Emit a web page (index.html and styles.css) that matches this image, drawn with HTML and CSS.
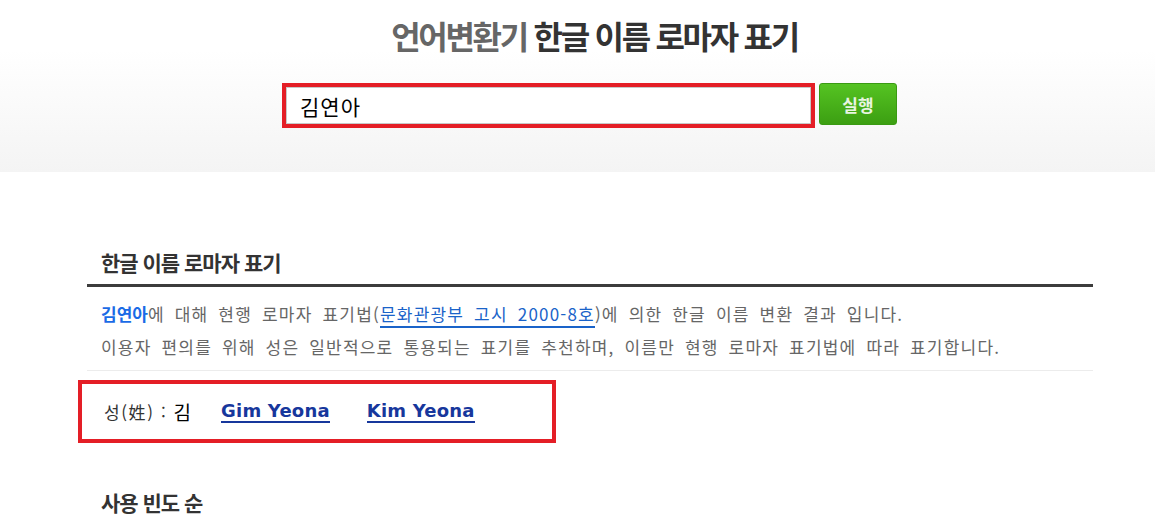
FILE: index.html
```html
<!DOCTYPE html>
<html lang="ko">
<head>
    <meta charset="UTF-8">
    <meta name="viewport" content="width=device-width, initial-scale=1.0">
    <title>언어변환기 - 한글 이름 로마자 표기</title>
    <link rel="stylesheet" href="styles.css">
</head>
<body>
    <header class="top">
        <h1 class="title"><span class="muted">언어변환기</span> 한글 이름 로마자 표기</h1>
        <form class="search" onsubmit="return false;">
            <div class="field">
                <input type="text" id="name" value="김연아">
            </div>
            <button type="submit" class="run">실행</button>
        </form>
    </header>

    <main class="content">
        <section class="block">
            <h2 class="sec-title">한글 이름 로마자 표기</h2>
            <div class="desc">
                <p><strong class="hl">김연아</strong>에 대해 현행 로마자 표기법(<a href="#" class="ref">문화관광부 고시 2000-8호</a>)에 의한 한글 이름 변환 결과 입니다.</p>
                <p>이용자 편의를 위해 성은 일반적으로 통용되는 표기를 추천하며, 이름만 현행 로마자 표기법에 따라 표기합니다.</p>
            </div>
            <div class="result">
                <span class="label">성(姓) : </span><span class="surname">김</span>
                <a href="#" class="roman">Gim Yeona</a>
                <a href="#" class="roman">Kim Yeona</a>
            </div>
        </section>

        <section class="block">
            <h2 class="sec-title plain">사용 빈도 순</h2>
        </section>
    </main>
</body>
</html>
```

FILE: styles.css
```css
body {
    margin: 0;
    font-family: "Noto Sans CJK KR", "Liberation Sans", sans-serif;
    background: #fff;
    color: #333;
}
.top {
    height: 172px;
    box-sizing: border-box;
    padding: 14px 0 0 24px;
    background: linear-gradient(#fff 0, #fff 50px, #f4f4f4 100%);
}
.title {
    margin: 0;
    padding-left: 10px;
    text-align: center;
    font-size: 32px;
    line-height: 42px;
    font-weight: bold;
    letter-spacing: -2.3px;
    color: #333;
}
.title .muted {
    color: #666;
}
.search {
    display: flex;
    justify-content: center;
    align-items: flex-start;
    gap: 4px;
    margin-top: 27px;
}
.field {
    width: 525px;
    height: 37px;
    border: 4px solid #e41e26;
}
.field input {
    width: 100%;
    height: 100%;
    box-sizing: border-box;
    margin: 0;
    border: 1px solid #c8c8c8;
    padding: 0 0 0 13px;
    font-family: "Noto Sans CJK KR", sans-serif;
    font-size: 21px;
    letter-spacing: 1px;
    color: #000;
    outline: none;
}
.run {
    width: 78px;
    height: 42px;
    border: 1px solid #3a9a13;
    border-radius: 3px;
    background: linear-gradient(#55c322, #3c9f12);
    color: #e9f5e2;
    font-family: "Noto Sans CJK KR", sans-serif;
    font-size: 17px;
    font-weight: bold;
    cursor: pointer;
}
.content {
    width: 1006px;
    margin-left: 87px;
}
.block {
    margin-top: 75px;
}
.block + .block {
    margin-top: 44px;
}
.sec-title {
    margin: 0;
    padding: 0 0 7px 14px;
    font-size: 21px;
    line-height: 30px;
    letter-spacing: -1px;
    font-weight: bold;
    color: #333;
    border-bottom: 3px solid #3c3c3c;
}
.sec-title.plain {
    border-bottom: none;
}
.desc {
    padding: 10px 0 7px 14px;
    border-bottom: 1px solid #ececec;
    color: #666;
    font-size: 17px;
    letter-spacing: 1.2px;
    word-spacing: 4px;
}
.desc p {
    margin: 0;
    line-height: 33px;
}
.hl {
    color: #1a6be6;
    letter-spacing: 0;
}
.ref {
    color: #1a63c9;
    text-decoration: none;
    border-bottom: 2px solid #1a63c9;
}
.result {
    height: 55px;
    margin: 9px 0 0 -9px;
    padding: 0 0 0 22px;
    box-sizing: content-box;
    border: 4px solid #e41e26;
    display: flex;
    align-items: center;
    width: 448px;
}
.label {
    font-size: 17px;
    letter-spacing: 1.6px;
    color: #333;
    white-space: pre;
}
.surname {
    font-size: 19px;
    color: #000;
}
.roman {
    margin-left: 30px;
    font-family: "DejaVu Sans", sans-serif;
    font-size: 18px;
    letter-spacing: 0.2px;
    font-weight: bold;
    color: #17379c;
    text-decoration: none;
    line-height: 21px;
    border-bottom: 2px solid #17379c;
}
.roman + .roman {
    margin-left: 37px;
}
```
